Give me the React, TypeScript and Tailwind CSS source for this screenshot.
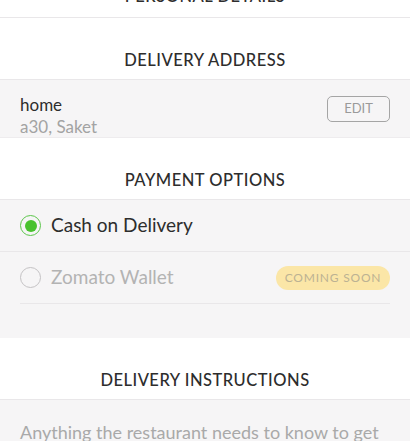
import { useState } from "react";

function SectionHeading({ title }: { title: string }) {
  return (
    <div className="flex h-[62px] items-end justify-center border-b border-[#e9e7e9] bg-white pb-[9px]">
      <h2 className="text-[16.5px] leading-[20px] font-medium tracking-[0.5px] text-[#2d2d2d] uppercase">
        {title}
      </h2>
    </div>
  );
}

function Radio({ checked, disabled }: { checked: boolean; disabled?: boolean }) {
  return (
    <span
      className={
        checked
          ? "flex h-[21px] w-[21px] shrink-0 items-center justify-center rounded-full border-[1.5px] border-[#5cc64b]"
          : disabled
          ? "flex h-[21px] w-[21px] shrink-0 items-center justify-center rounded-full border-[1.5px] border-[#c4c2c4]"
          : "flex h-[21px] w-[21px] shrink-0 items-center justify-center rounded-full border-[1.5px] border-[#9c9c9c]"
      }
    >
      {checked && <span className="h-[12px] w-[12px] rounded-full bg-[#48c22e]" />}
    </span>
  );
}

export default function App() {
  const [payment, setPayment] = useState("cod");

  return (
    <div className="min-h-[441px] w-[410px] overflow-hidden bg-white font-['Lato','Open_Sans',sans-serif]">
      {/* Personal details (scrolled off) */}
      <div className="flex h-[18px] items-end justify-center overflow-hidden border-b border-[#e9e7e9] bg-white pb-[11px]">
        <h2 className="text-[16.5px] leading-[20px] font-medium tracking-[0.5px] text-[#2d2d2d] uppercase">
          Personal Details
        </h2>
      </div>

      {/* Delivery address */}
      <SectionHeading title="Delivery Address" />
      <div className="flex h-[58px] items-center justify-between border-b border-[#eeecee] bg-[#f6f5f6] px-5">
        <div className="flex flex-col self-start pt-[14px]">
          <span className="text-[17px] leading-[22px] text-[#2d2d2d]">home</span>
          <span className="text-[17px] leading-[22px] text-[#a3a3a3]">a30, Saket</span>
        </div>
        <button className="flex h-[26px] w-[63px] items-center justify-center rounded-[5px] border-[1.5px] border-[#a5a5a5] text-[13px] text-[#9a9a9a] uppercase">
          Edit
        </button>
      </div>

      {/* Payment options */}
      <SectionHeading title="Payment Options" />
      <div className="bg-[#f6f5f6] pb-[34px]">
        <button
          onClick={() => setPayment("cod")}
          className="flex h-[52px] w-full items-center gap-[10px] border-b border-[#e9e7e9] px-5 text-left"
        >
          <Radio checked={payment === "cod"} />
          <span className="text-[19px] text-[#2d2d2d]">Cash on Delivery</span>
        </button>
        <div className="mx-5 flex h-[52px] items-center justify-between border-b border-[#e9e7e9]">
          <div className="flex items-center gap-[10px]">
            <Radio checked={false} disabled />
            <span className="text-[19px] text-[#b3b3b3]">Zomato Wallet</span>
          </div>
          <span className="flex h-[24px] w-[114px] items-center justify-center rounded-full bg-[#fbe6a7] text-[12px] font-normal tracking-[0.8px] text-[#bcb293] uppercase">
            Coming Soon
          </span>
        </div>
      </div>

      {/* Delivery instructions */}
      <SectionHeading title="Delivery Instructions" />
      <div className="bg-[#f6f5f6] px-5 pt-[20px] pb-4">
        <p className="text-[18px] leading-[24px] text-[#a9a9a9]">
          Anything the restaurant needs to know to get your order right
        </p>
      </div>
    </div>
  );
}
